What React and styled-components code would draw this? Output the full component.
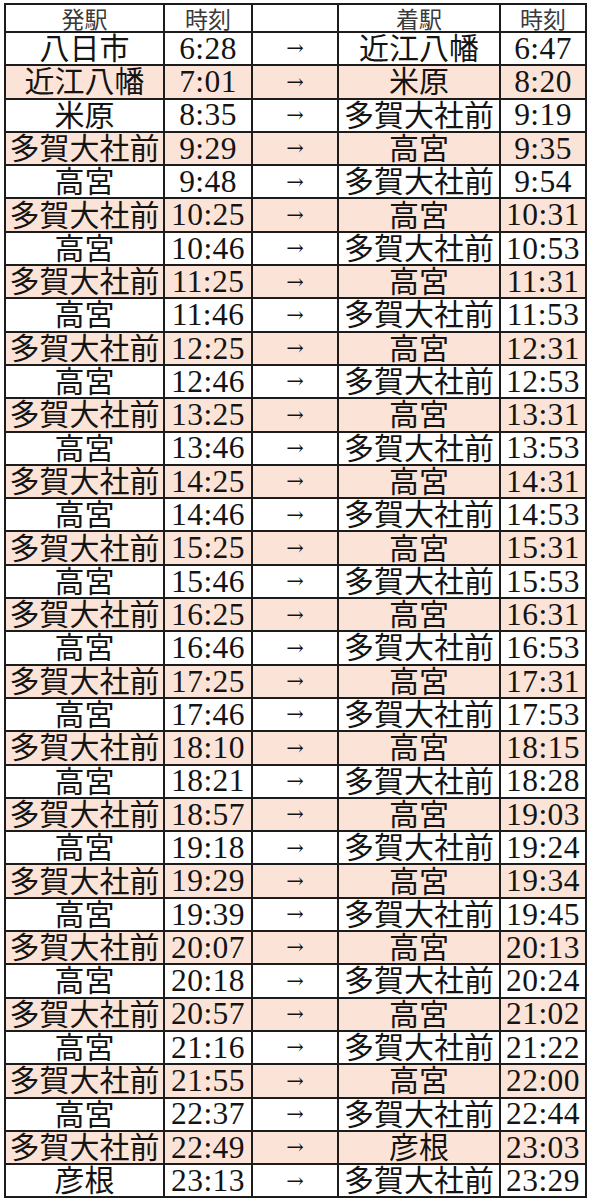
import React from "react";
import styled, { createGlobalStyle } from "styled-components";

const Global = createGlobalStyle`
  html, body { margin: 0; padding: 0; background: #ffffff; }
  body { font-family: "Liberation Serif", "Noto Sans CJK JP", serif; }
`;

const Page = styled.div`
  padding: 3px 0 0 4px;
  width: 592px;
  box-sizing: border-box;
`;

const Table = styled.div`
  display: grid;
  grid-template-columns: 157px 86px 84px 160px 84px;
  grid-template-rows: 26px repeat(35, 31.3px);
  gap: 2px;
  padding: 2px;
  width: max-content;
  background: #1c1c1c;
`;

const Cell = styled.div`
  display: flex;
  align-items: center;
  justify-content: center;
  white-space: nowrap;
  min-width: 0;
  background: ${(p) => (p.$pink ? "#fbe4d7" : "#ffffff")};
  color: #141414;
  line-height: 0.97;
  font-family: ${(p) =>
    p.$kind === "arrow"
      ? `"DejaVu Serif", "Liberation Serif", serif`
      : `"Liberation Serif", "Noto Sans CJK JP", serif`};
  font-size: ${(p) =>
    p.$kind === "time" ? "31.5px" : p.$kind === "arrow" ? "21px" : "30px"};
  letter-spacing: ${(p) => (p.$kind === "time" ? "0.4px" : "0")};
  padding-top: ${(p) => (p.$kind === "time" ? "1px" : "0")};
`;

const HeadCell = styled.div`
  display: flex;
  align-items: center;
  justify-content: center;
  background: #ffffff;
  color: #3a3a3a;
  font-family: "Noto Sans CJK JP", sans-serif;
  font-size: 23px;
  line-height: 1;
`;

const T = "多賀大社前";
const K = "高宮";

const base = [
  ["八日市", "6:28", "近江八幡", "6:47"],
  ["近江八幡", "7:01", "米原", "8:20"],
  ["米原", "8:35", T, "9:19"],
  [T, "9:29", K, "9:35"],
  [K, "9:48", T, "9:54"],
];

const pairs = [
  ["10:25", "10:31", "10:46", "10:53"],
  ["11:25", "11:31", "11:46", "11:53"],
  ["12:25", "12:31", "12:46", "12:53"],
  ["13:25", "13:31", "13:46", "13:53"],
  ["14:25", "14:31", "14:46", "14:53"],
  ["15:25", "15:31", "15:46", "15:53"],
  ["16:25", "16:31", "16:46", "16:53"],
  ["17:25", "17:31", "17:46", "17:53"],
  ["18:10", "18:15", "18:21", "18:28"],
  ["18:57", "19:03", "19:18", "19:24"],
  ["19:29", "19:34", "19:39", "19:45"],
  ["20:07", "20:13", "20:18", "20:24"],
  ["20:57", "21:02", "21:16", "21:22"],
  ["21:55", "22:00", "22:37", "22:44"],
];

const rows = [...base];
pairs.forEach(([a, b, c, d]) => {
  rows.push([T, a, K, b]);
  rows.push([K, c, T, d]);
});
rows.push([T, "22:49", "彦根", "23:03"]);
rows.push(["彦根", "23:13", T, "23:29"]);

export default function App() {
  return (
    <Page>
      <Global />
      <Table>
        <HeadCell>発駅</HeadCell>
        <HeadCell>時刻</HeadCell>
        <HeadCell />
        <HeadCell>着駅</HeadCell>
        <HeadCell>時刻</HeadCell>
        {rows.map((r, i) => {
          const pink = i % 2 === 1;
          return (
            <React.Fragment key={i}>
              <Cell $pink={pink} $kind="station">{r[0]}</Cell>
              <Cell $pink={pink} $kind="time">{r[1]}</Cell>
              <Cell $pink={pink} $kind="arrow">→</Cell>
              <Cell $pink={pink} $kind="station">{r[2]}</Cell>
              <Cell $pink={pink} $kind="time">{r[3]}</Cell>
            </React.Fragment>
          );
        })}
      </Table>
    </Page>
  );
}
